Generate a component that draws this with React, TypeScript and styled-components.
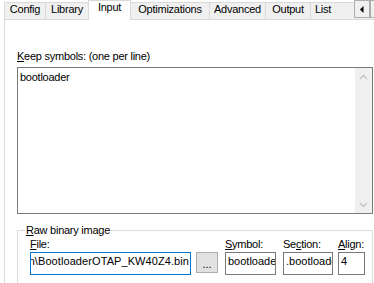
import React from 'react';
import styled, { createGlobalStyle } from 'styled-components';

const Global = createGlobalStyle`
  html, body { margin: 0; padding: 0; background: #fff; }
  body { font-family: "Liberation Sans", Arial, sans-serif; }
`;

const Window = styled.div`
  position: relative;
  width: 374px;
  height: 283px;
  overflow: hidden;
  background: #fff;
  font-family: "Liberation Sans", Arial, sans-serif;
  font-size: 11px;
  line-height: 13px;
  letter-spacing: -0.25px;
  color: #000;
`;

const TabStrip = styled.div`
  position: relative;
  z-index: 1;
  display: flex;
  align-items: flex-end;
  height: 19px;
  padding-left: 4px;
`;

const Tab = styled.div<{ $w: number; $active?: boolean; $pad?: number }>`
  flex: none;
  position: relative;
  z-index: ${(p) => (p.$active ? 2 : 1)};
  box-sizing: border-box;
  width: ${(p) => p.$w + 1}px;
  height: ${(p) => (p.$active ? 20 : 17)}px;
  margin-right: -1px;
  margin-bottom: ${(p) => (p.$active ? -1 : 0)}px;
  padding-left: ${(p) => p.$pad ?? 0}px;
  border: 1px solid #d9d9d9;
  border-bottom: none;
  background: ${(p) => (p.$active ? '#fff' : '#f0f0f0')};
  text-align: ${(p) => (p.$pad != null ? 'left' : 'center')};
  white-space: nowrap;
  overflow: hidden;
`;

const ScrollButtons = styled.div`
  position: absolute;
  top: 0;
  left: 354px;
  z-index: 3;
  display: flex;
`;

const ScrollButton = styled.div`
  box-sizing: border-box;
  width: 16px;
  height: 18px;
  border: 1px solid #adadad;
  background: #f0f0f0;
  display: flex;
  align-items: center;
  justify-content: center;
`;

const Panel = styled.div`
  margin-left: 4px;
  border-left: 1px solid #d9d9d9;
  border-top: 1px solid #d9d9d9;
  padding: 30px 0 0 12px;
  height: 400px;
`;

const FieldLabel = styled.div<{ $gap?: number }>`
  display: block;
  margin-bottom: ${(p) => p.$gap ?? 0}px;
  white-space: nowrap;
`;

const TextArea = styled.div`
  box-sizing: border-box;
  display: flex;
  width: 356px;
  height: 147px;
  border: 1px solid #7a7a7a;
`;

const TextContent = styled.div`
  flex: 1;
  padding: 3px 2px;
`;

const VScroll = styled.div`
  flex: none;
  width: 17px;
  background: #f0f0f0;
  display: flex;
  flex-direction: column;
  justify-content: space-between;
`;

const ScrollArrow = styled.div`
  height: 17px;
  display: flex;
  align-items: center;
  justify-content: center;
`;

const Group = styled.fieldset`
  box-sizing: border-box;
  width: 356px;
  height: 120px;
  margin: 10px 0 0 0;
  padding: 0 0 0 12px;
  border: 1px solid #dcdcdc;
  min-inline-size: 0;
`;

const GroupLegend = styled.legend`
  padding: 0 1px;
  margin-left: -5px;
  line-height: 13px;
`;

const FieldRow = styled.div`
  display: flex;
  align-items: flex-end;
  margin-top: 1px;
`;

const Field = styled.div<{ $ml?: number }>`
  display: flex;
  flex-direction: column;
  gap: 1px;
  margin-left: ${(p) => p.$ml ?? 0}px;
`;

const InputBox = styled.div<{ $w: number; $focused?: boolean; $end?: boolean }>`
  box-sizing: border-box;
  width: ${(p) => p.$w}px;
  height: 23px;
  border: 1px solid ${(p) => (p.$focused ? '#0078d7' : '#7a7a7a')};
  padding: 2px ${(p) => (p.$end ? 1 : 0)}px 0 2px;
  display: flex;
  align-items: flex-start;
  justify-content: ${(p) => (p.$end ? 'flex-end' : 'flex-start')};
  overflow: hidden;
  white-space: nowrap;
  background: #fff;
  letter-spacing: ${(p) => (p.$end ? 0.08 : 0)}px;
`;

const InputText = styled.span`
  flex: none;
`;

const BrowseButton = styled.div`
  box-sizing: border-box;
  flex: none;
  width: 22px;
  height: 21px;
  margin-left: 5px;
  margin-bottom: 2px;
  border: 1px solid #adadad;
  background: #e1e1e1;
  display: flex;
  align-items: center;
  justify-content: center;
  padding-top: 3px;
  letter-spacing: 0;
`;

const tabs: { label: string; w: number; active?: boolean; pad?: number }[] = [
  { label: 'Config', w: 41 },
  { label: 'Library', w: 43 },
  { label: 'Input', w: 42, active: true },
  { label: 'Optimizations', w: 79 },
  { label: 'Advanced', w: 56 },
  { label: 'Output', w: 45 },
  { label: 'List', w: 60, pad: 4 },
];

const Chevron = ({ up }: { up?: boolean }) => (
  <svg width="9" height="6" viewBox="0 0 9 6">
    <polyline
      points={up ? '1,5 4.5,1.5 8,5' : '1,1 4.5,4.5 8,1'}
      fill="none"
      stroke="#c2c2c2"
      strokeWidth="1.3"
    />
  </svg>
);

export default function App() {
  return (
    <>
      <Global />
      <Window>
        <TabStrip>
          {tabs.map((t) => (
            <Tab key={t.label} $w={t.w} $active={t.active} $pad={t.pad}>
              {t.label}
            </Tab>
          ))}
        </TabStrip>
        <ScrollButtons>
          <ScrollButton>
            <svg width="4" height="7" viewBox="0 0 4 7">
              <polygon points="3.5,0 0,3.5 3.5,7" fill="#000" />
            </svg>
          </ScrollButton>
          <ScrollButton />
        </ScrollButtons>
        <Panel>
          <FieldLabel $gap={4}>
            <u>K</u>eep symbols: (one per line)
          </FieldLabel>
          <TextArea>
            <TextContent>bootloader</TextContent>
            <VScroll>
              <ScrollArrow>
                <Chevron up />
              </ScrollArrow>
              <ScrollArrow>
                <Chevron />
              </ScrollArrow>
            </VScroll>
          </TextArea>
          <Group>
            <GroupLegend>
              <u>R</u>aw binary image
            </GroupLegend>
            <FieldRow>
              <Field>
                <FieldLabel>
                  <u>F</u>ile:
                </FieldLabel>
                <InputBox $w={161} $focused $end>
                  <InputText>C:\NXP\Connectivity\Tests\bin\BootloaderOTAP_KW40Z4.bin</InputText>
                </InputBox>
              </Field>
              <BrowseButton>...</BrowseButton>
              <Field $ml={7}>
                <FieldLabel>
                  <u>S</u>ymbol:
                </FieldLabel>
                <InputBox $w={51}>
                  <InputText>bootloader</InputText>
                </InputBox>
              </Field>
              <Field $ml={7}>
                <FieldLabel>
                  Se<u>c</u>tion:
                </FieldLabel>
                <InputBox $w={50}>
                  <InputText>.bootloader</InputText>
                </InputBox>
              </Field>
              <Field $ml={5}>
                <FieldLabel>
                  <u>A</u>lign:
                </FieldLabel>
                <InputBox $w={27}>
                  <InputText>4</InputText>
                </InputBox>
              </Field>
            </FieldRow>
          </Group>
        </Panel>
      </Window>
    </>
  );
}
